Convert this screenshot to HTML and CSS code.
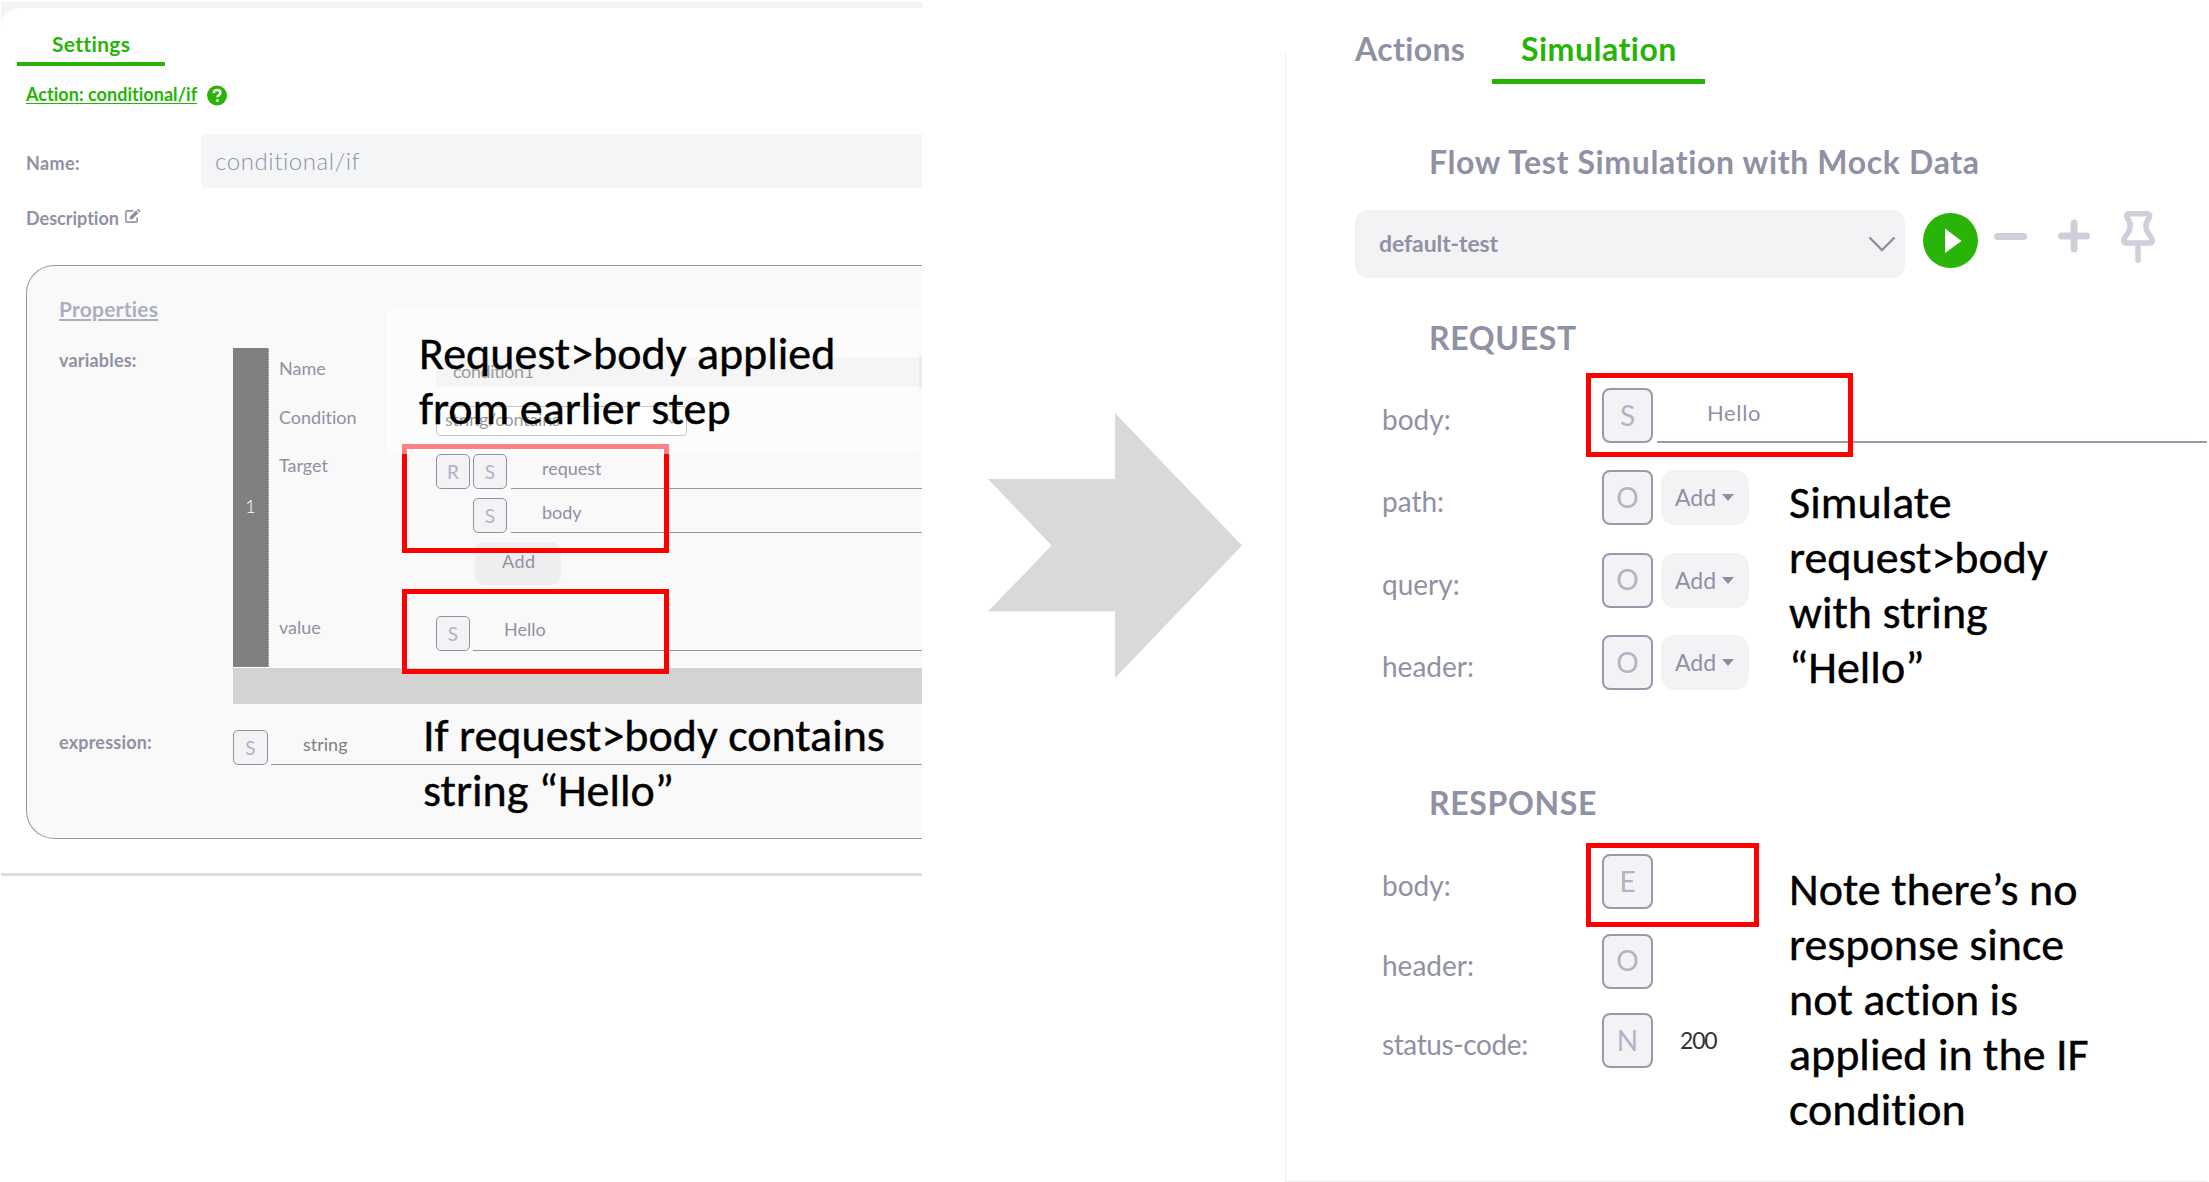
FILE: index.html
```html
<!DOCTYPE html>
<html lang="en">
<head>
<meta charset="utf-8">
<title>Conditional action</title>
<link rel="stylesheet" href="styles.css">
</head>
<body>
<div class="slide">
  <section class="settings">
    <div class="card">
      <div class="tab tab-settings">Settings</div>
      <div class="action">
        <a class="action-link">Action: conditional/if</a>
        <svg class="help" viewBox="0 0 20 20"><circle cx="10" cy="10" r="10"/><path d="M6.6 7.6C6.8 5.4 8.2 4.4 10.1 4.4c2 0 3.3 1.1 3.3 2.8 0 2.3-2.9 2.4-2.9 4.6" fill="none" stroke="#fff" stroke-width="2.5"/><circle cx="10.4" cy="15" r="1.6" fill="#fff"/></svg>
      </div>
      <div class="name-row">
        <span class="label">Name:</span>
        <div class="name-input">conditional/if</div>
      </div>
      <div class="description">Description
        <svg class="edit" viewBox="0 0 16 14"><path d="M8.5 1.9H1.9q-1 0-1 1v9.2q0 1 1 1h9.3q1 0 1-1V8.6" fill="none" stroke="#9496a8" stroke-width="1.6"/><path d="M4.6 10.4l.4-3 6-5.9 2.5 2.5-6 5.9zM11.8.8l.8-.6q.6-.4 1.1.1l1.5 1.4q.5.6 0 1.1l-.8.7z" fill="#8c8ea1"/></svg>
      </div>
      <div class="properties">
        <h2 class="properties-title">Properties</h2>
        <div class="prop">
          <span class="prop-label">variables:</span>
          <div class="prop-value">
            <div class="item">
              <div class="item-index">1</div>
              <div class="fields">
                <div class="field field-name"><span>Name</span><div class="input">condition1</div></div>
                <div class="field field-condition"><span>Condition</span>
                  <div class="select">string/contains<svg class="select-arrow" viewBox="0 0 12 7"><path d="M1 1l5 5 5-5" fill="none" stroke="#555" stroke-width="1.6"/></svg></div>
                </div>
                <div class="field field-target"><span>Target</span>
                  <div class="path">
                    <div class="path-line"><b class="chip">R</b><b class="chip">S</b><div class="line-input">request</div></div>
                    <div class="path-line path-nested"><b class="chip">S</b><div class="line-input">body</div></div>
                    <div class="add">Add</div>
                  </div>
                </div>
                <div class="field field-value"><span>value</span>
                  <div class="path-line"><b class="chip">S</b><div class="line-input tight">Hello</div></div>
                </div>
              </div>
            </div>
            <div class="append"></div>
          </div>
        </div>
        <div class="prop prop-expression">
          <span class="prop-label">expression:</span>
          <div class="path-line"><b class="chip chip-wide">S</b><div class="line-input tight dark">string</div></div>
        </div>
      </div>
    </div>
  </section>

  <svg class="arrow" viewBox="0 0 254 265"><path d="M0 66h127V0l127 132.500L127 265v-66.500H0l63.500-66z" fill="#d9d9d9"/></svg>

  <section class="sim">
    <div class="sim-tabs"><div class="sim-tab">Actions</div><div class="sim-tab active">Simulation</div></div>
    <h2 class="heading title">Flow Test Simulation with Mock Data</h2>
    <div class="toolbar">
      <div class="test-select">default-test<svg class="test-arrow" viewBox="0 0 28 16"><path d="M1.500 1.500L14 14 26.500 1.500" fill="none" stroke="#8c8fa3" stroke-width="2.400"/></svg></div>
      <svg class="play" viewBox="0 0 55 55"><circle cx="27.500" cy="27.500" r="27.500" fill="#2ab407"/><path d="M22 15.500l16.500 12.500L22 40z" fill="#fff"/></svg>
      <svg class="minus" viewBox="0 0 33 7"><path d="M3.500 3.500h26"/></svg>
      <svg class="plus" viewBox="0 0 32 34"><path d="M3.500 17h25M16 4v26"/></svg>
      <svg class="pin" viewBox="0 0 34 52"><path d="M7.500 2.800h19.500a2.300 2.300 0 0 1 1.300 3.600c-4.300 6-4.600 11.500-.7 16.500 1.700 2.100 3.300 4 3.600 6.300.2 1.700-.9 2.800-2.600 2.800H5.400c-1.700 0-2.800-1.100-2.600-2.800.3-2.300 1.900-4.200 3.600-6.300 3.900-5 3.600-10.500-.3-16.500a2.300 2.300 0 0 1 1.400-3.600zM17 32v17.200"/></svg>
    </div>
    <h2 class="heading request">REQUEST</h2>
    <div class="rows">
      <div class="row"><span>body:</span><b class="type">S</b><div class="row-input">Hello</div></div>
      <div class="row"><span>path:</span><b class="type">O</b><div class="row-add">Add<i class="caret"></i></div></div>
      <div class="row"><span>query:</span><b class="type">O</b><div class="row-add">Add<i class="caret"></i></div></div>
      <div class="row"><span>header:</span><b class="type">O</b><div class="row-add">Add<i class="caret"></i></div></div>
    </div>
    <h2 class="heading response">RESPONSE</h2>
    <div class="rows rows-response">
      <div class="row"><span>body:</span><b class="type">E</b></div>
      <div class="row"><span>header:</span><b class="type">O</b></div>
      <div class="row"><span class="status">status-code:</span><b class="type">N</b><div class="code">200</div></div>
    </div>
  </section>

  <div class="mark mark-target"></div>
  <div class="mark mark-value"></div>
  <div class="mark mark-request"></div>
  <div class="mark mark-response"></div>
  <p class="note note-source">Request&gt;body applied<br>from earlier step</p>
  <p class="note note-condition">If request&gt;body contains<br>string “Hello”</p>
  <p class="note note-simulate">Simulate<br>request&gt;body<br>with string<br>“Hello”</p>
  <p class="note note-result">Note there’s no<br>response since<br>not action is<br>applied in the IF<br>condition</p>
</div>
</body>
</html>
```
FILE: styles.css
```css
* { box-sizing: border-box; }
body { margin: 0; background: #fff; font-family: Lato, "Open Sans", sans-serif; font-variant-ligatures: none; color: #8f91a4; }
h2, p { margin: 0; }
svg { display: block; flex: none; }
.slide { position: relative; display: flex; align-items: flex-start; width: 2209px; height: 1182px; overflow: hidden; }

/* Settings panel */
.settings { flex: none; width: 921px; margin: 2px 0 0 1px; padding-top: 6px; background: linear-gradient(#f3f4f6 40px, #fff 40px); }
.card { height: 868px; background: #fff; border-top-left-radius: 18px; border-bottom: 3px solid #dedede; }
.tab-settings { width: 148px; height: 58px; margin-left: 16px; padding: 21px 0 0 35px; border-bottom: 4px solid #26b406; color: #26b406; font-size: 21px; font-weight: 700; line-height: 30px; letter-spacing: .32px; }
.action { display: flex; gap: 10px; margin: 13px 0 0 25px; height: 30px; }
.action-link { color: #26b406; font-size: 18px; font-weight: 700; line-height: 31px; letter-spacing: .04px; text-decoration: underline; text-decoration-thickness: 1px; text-underline-offset: 2px; text-decoration-skip-ink: none; }
.help { width: 20px; height: 21px; margin-top: 6px; fill: #26b406; }
.name-row { display: flex; margin: 25px 0 0 25px; height: 54px; }
.label { width: 175px; font-size: 18px; font-weight: 700; line-height: 59px; letter-spacing: .4px; }
.name-input { flex: 1; padding-left: 14px; border-radius: 5px 0 0 5px; background: #f4f5f7; font-size: 24px; font-weight: 300; line-height: 53px; letter-spacing: .58px; }
.description { display: flex; gap: 6px; margin: 14px 0 0 25px; height: 30px; font-size: 18px; font-weight: 700; line-height: 32px; }
.edit { width: 16px; height: 14px; margin-top: 7px; }
.properties { height: 574px; margin: 33px 0 0 25px; padding: 27px 0 0 32px; border: 1px solid #9698aa; border-right: 0; border-radius: 28px 0 0 28px; background: #f9f9f9; }
.properties-title { margin-bottom: 25px; color: #abaec3; font-size: 21px; font-weight: 700; line-height: 31px; height: 30px; letter-spacing: .21px; text-decoration: underline; text-decoration-thickness: 2px; text-underline-offset: 2px; }
.prop { display: grid; grid-template-columns: 174px 1fr; }
.prop-expression { margin-top: 26px; }
.prop-label { font-size: 18px; font-weight: 700; line-height: 24px; letter-spacing: .2px; }
.item { display: flex; height: 320px; border-bottom: 1px solid #fff; }
.item-index { width: 36px; padding-bottom: 4px; display: flex; align-items: center; justify-content: center; background: #808080; border-right: 1px dotted #ccc; color: #fff; font-size: 18px; font-weight: 300; }
.fields { flex: 1; padding: 9px 0 0 10px; }
.field { display: grid; grid-template-columns: 157px 1fr; font-size: 18px; line-height: 23px; }
.field-condition { margin-top: 19px; }
.field-target { margin-top: 18px; }
.field-value { margin-top: 31px; }
.field-value > span { line-height: 22px; }
.input { height: 30px; padding-left: 17px; background: #eaeaed; color: #333; line-height: 28px; letter-spacing: -.38px; }
.select { display: flex; justify-content: space-between; width: 251px; height: 30px; padding: 0 8px 0 8px; border: 1px solid #888; border-radius: 4px; background: #fff; color: #333; line-height: 24px; letter-spacing: -.23px; }
.select-arrow { width: 12px; height: 7px; margin-top: 10px; }
.path-line { display: flex; gap: 3px; height: 35px; }
.path-nested { margin: 9px 0; padding-left: 37px; }
.chip { display: flex; align-items: center; justify-content: center; width: 34px; height: 35px; padding-bottom: 1px; border: 1px solid #8f91a4; border-radius: 5px; background: #f3f3f6; color: #b0b2c6; font-size: 19px; font-weight: 400; }
.chip-wide { width: 35px; }
.line-input { flex: 1; margin-left: 1px; padding-left: 31px; border-bottom: 1px solid #9294a7; font-size: 18px; line-height: 29px; }
.line-input.tight { margin-left: 0; padding-left: 31px; line-height: 27px; }
.line-input.dark { padding-left: 32px; color: #808080; line-height: 29px; }
.add { width: 86px; height: 43px; margin-left: 39px; padding-left: 27px; border-radius: 9px; background: #eeeeef; line-height: 39px; letter-spacing: .5px; }
.append { height: 36px; background: #d3d3d3; }

.arrow { width: 254px; height: 265px; margin: 412.500px 0 0 66px; }

/* Simulation panel */
.sim { flex: none; width: 922px; height: 1182px; margin-left: 43px; border: solid; border-width: 0 0 1px 1px; border-image: linear-gradient(transparent 54px, #eeeef0 54px) 1; }
.sim-tabs { display: flex; height: 84px; padding-left: 69px; font-size: 32px; font-weight: 700; line-height: 42px; }
.sim-tab { width: 137px; padding-top: 28px; letter-spacing: .35px; }
.sim-tab.active { width: 213px; padding-left: 29px; border-bottom: 5px solid #26b406; color: #26b406; letter-spacing: .5px; }
.heading { height: 40px; margin-left: 143px; font-size: 32px; font-weight: 700; line-height: 41px; letter-spacing: .65px; }
.title { margin-top: 57px; }
.request { margin-top: 39px; }
.response { margin-top: 92px; }
.toolbar { display: flex; margin: 29px 0 0 69px; height: 68px; }
.test-select { display: flex; justify-content: space-between; width: 550px; height: 68px; padding: 0 9px 0 24px; border-radius: 13px; background: #f3f3f5; font-size: 23px; font-weight: 700; line-height: 66px; letter-spacing: -.1px; }
.test-arrow { width: 28px; height: 16px; margin-top: 26px; }
.play { width: 55px; height: 55px; margin: 3px 0 0 18px; }
.minus, .plus, .pin { fill: none; stroke: #cfcfdb; stroke-width: 7; stroke-linecap: round; stroke-linejoin: round; }
.minus { width: 33px; height: 7px; margin: 23px 0 0 16px; }
.plus { width: 32px; height: 34px; margin: 9px 0 0 31px; }
.pin { width: 34px; height: 52px; margin: 1px 0 0 31px; stroke-width: 5.500; }
.rows { display: flex; flex-direction: column; gap: 27.400px; margin-top: 31px; padding-left: 96px; }
.rows-response { gap: 24.500px; margin-top: 32px; }
.row { display: flex; height: 55px; }
.row > span { width: 220px; font-size: 28px; line-height: 63px; }
.row > .status { letter-spacing: -.4px; }
.type { display: flex; align-items: center; justify-content: center; width: 51px; height: 55px; padding-bottom: 2px; border: 2px solid #989aac; border-radius: 8px; background: #f3f3f5; color: #b0b4c6; font-size: 28px; font-weight: 400; }
.row-input { flex: 1; margin-left: 4px; padding-left: 50px; border-bottom: 2px solid #9a9cae; font-size: 22px; line-height: 49px; letter-spacing: .64px; }
.row-add { display: flex; gap: 6px; width: 88px; margin-left: 8px; padding-left: 14px; border-radius: 14px; background: #f3f3f5; font-size: 23px; line-height: 55px; }
.caret { height: 0; margin-top: 24px; border: solid transparent; border-width: 7px 6.500px 0; border-top-color: #8c8fa3; }
.code { margin-left: 27px; color: #333; font-size: 23px; line-height: 55px; letter-spacing: -1.200px; }

/* Annotations laid over the panels */
.mark { position: absolute; border: 5px solid #f00; }
.mark-target { left: 402px; top: 444px; width: 267px; height: 109px; }
.mark-value { left: 402px; top: 589px; width: 267px; height: 85px; }
.mark-request { left: 1586px; top: 373px; width: 267px; height: 84px; }
.mark-response { left: 1586px; top: 843px; width: 173px; height: 84px; }
.note { position: absolute; color: #000; font-family: Carlito, Calibri, Lato, sans-serif; font-size: 46px; line-height: 55px; white-space: nowrap; -webkit-text-stroke: .4px #000; }
.note-source { left: 386px; top: 310px; width: 533px; height: 144px; padding: 16px 0 0 33px; background: rgba(255, 255, 255, .5); }
.note-condition { left: 423px; top: 708px; }
.note-simulate { left: 1789px; top: 475px; }
.note-result { left: 1789px; top: 862px; }
```
